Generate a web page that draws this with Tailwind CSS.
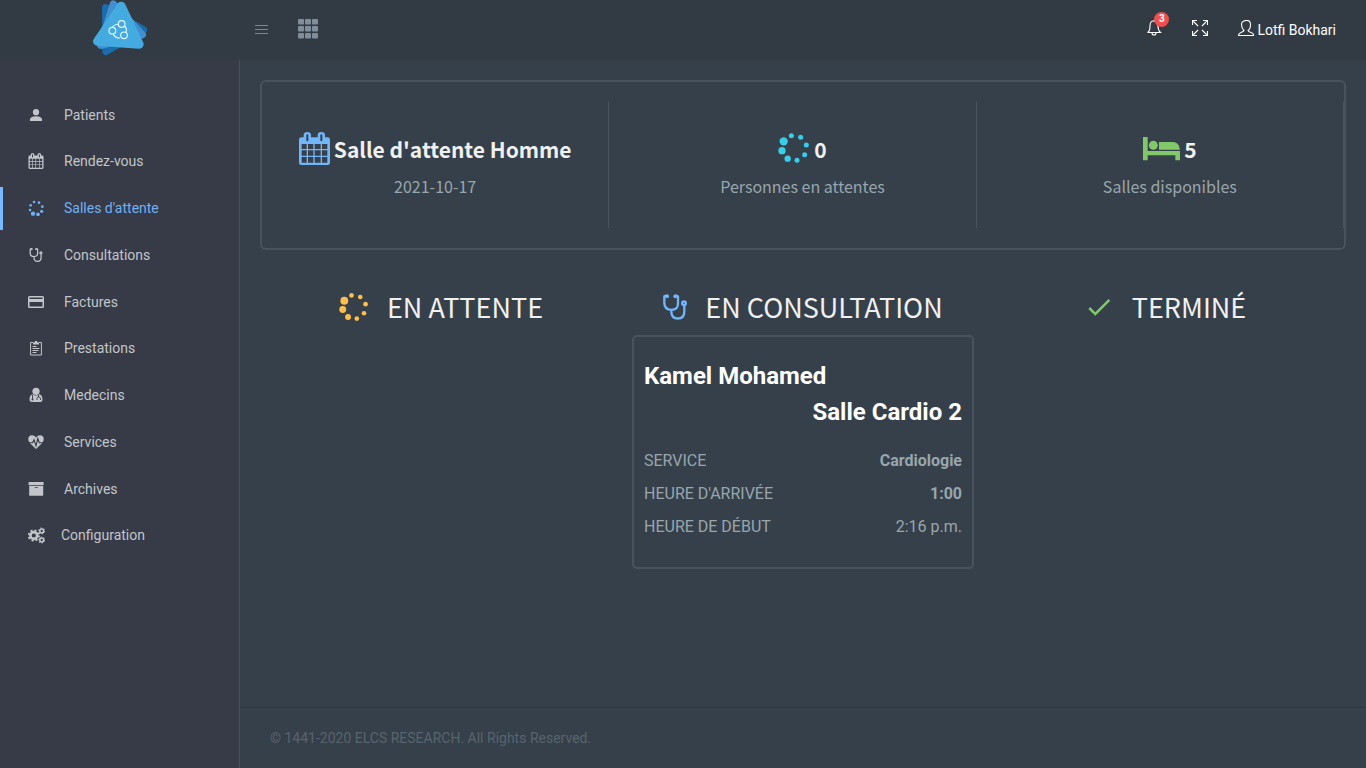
<!DOCTYPE html>
<html lang="fr">
<head>
<meta charset="utf-8">
<meta name="viewport" content="width=device-width, initial-scale=1">
<title>Salles d'attente</title>
<script src="https://cdn.jsdelivr.net/npm/@tailwindcss/browser@4"></script>
</head>
<body class="flex min-h-screen flex-col bg-[#36404a] font-[Roboto,sans-serif] text-sm text-[#98a6ad]">
<svg class="hidden" aria-hidden="true">
  <symbol id="calendar" viewBox="0 0 93 99">
    <path fill="currentColor" fill-rule="evenodd" d="M7 16H14V10Q14 0 25 0T36 10V16H56V10Q56 0 67 0T78 10V16H86Q93 16 93 23V92Q93 99 86 99H7Q0 99 0 92V23Q0 16 7 16ZM22 10V25Q22 28 25 28T28 25V10Q28 7 25 7T22 10ZM64 10V25Q64 28 67 28T70 25V10Q70 7 67 7T64 10ZM8 36V51H23V36ZM27 36V51H43V36ZM47 36V51H65V36ZM69 36V51H85V36ZM8 55V71H23V55ZM27 55V71H43V55ZM47 55V71H65V55ZM69 55V71H85V55ZM8 75V92H23V75ZM27 75V92H43V75ZM47 75V92H65V75ZM69 75V92H85V75Z"/>
  </symbol>
  <symbol id="spinner" viewBox="0 0 96 96">
    <g fill="currentColor"><circle cx="17" cy="28" r="12.5"/><circle cx="40" cy="11" r="7.5"/><circle cx="68" cy="16" r="7.5"/><circle cx="85" cy="39" r="7.5"/><circle cx="80" cy="68" r="7.5"/><circle cx="57" cy="85" r="7.5"/><circle cx="29" cy="80" r="9.5"/><circle cx="12" cy="56" r="11"/></g>
  </symbol>
  <symbol id="stethoscope" viewBox="0 0 72 77">
    <g fill="none" stroke="currentColor" stroke-width="7"><path d="M12 5H6Q4 5 4 8V26Q4 47 25 47T45 26V8Q45 5 42 5H38M25 48V52Q25 73 44.500 73T64 52V35"/><circle cx="63" cy="27" r="5.500"/></g>
    <circle cx="12" cy="6" r="6" fill="currentColor"/><circle cx="37" cy="6" r="6" fill="currentColor"/>
  </symbol>
</svg>

<header class="flex h-[60px] shrink-0 items-center bg-[#323a43] shadow-[0_0_3px_rgba(50,58,67,0.6)]">
  <a href="#" aria-label="Accueil" class="flex h-full w-60 justify-center">
    <svg class="h-14 w-14" viewBox="0 0 168 168" stroke-linejoin="round">
      <path d="M41 23L154 90L42 154Z" fill="#1b6cab" stroke="#1b6cab" stroke-width="22"/>
      <path d="M64 12L151 104L26 136Z" fill="#418fd0" stroke="#418fd0" stroke-width="22"/>
      <path d="M88 18L142 133L16 124Z" fill="#43abe0" stroke="#43abe0" stroke-width="26"/>
      <g fill="none" stroke="#e4f6ff" stroke-width="3.500"><circle cx="89" cy="72" r="10"/><circle cx="61" cy="92" r="10"/><circle cx="96" cy="106" r="10"/><path d="M61 81Q66 74 79 72M98 78Q106 86 102 97M64 103Q71 115 84 114"/></g>
    </svg>
  </a>
  <button type="button" aria-label="Menu" class="ml-3.5 text-[#7a8792]">
    <svg class="h-4 w-4" viewBox="0 0 16 16" fill="none" stroke="currentColor"><path d="M1 3.500h13M1 7.500h13M1 11.500h13" stroke-width="1.200"/></svg>
  </button>
  <button type="button" aria-label="Applications" class="mb-0.5 ml-7 text-[#7f8e9a]">
    <svg class="h-5 w-5" viewBox="0 0 20 20" fill="currentColor"><g id="row"><rect width="6" height="5.500" rx="1"/><rect x="7" width="6" height="5.500" rx="1"/><rect x="14" width="6" height="5.500" rx="1"/></g><use href="#row" y="7"/><use href="#row" y="14"/></svg>
  </button>
  <div class="ml-auto flex items-center pr-[30px] pb-1 text-white">
    <button type="button" aria-label="Notifications, 3" class="relative">
      <svg class="h-4 w-4" viewBox="0 0 16 16" fill="none" stroke="currentColor" stroke-width="1.100"><path d="M1.500 12.500Q4 11.500 4 6T8 1T12 6T14.500 12.500ZM6 13Q6 15 8 15T10 13M8 1V0"/></svg>
      <span class="absolute -top-2 left-2 flex h-[15px] w-[15px] items-center justify-center rounded-full bg-[#f04f4f] text-[10px] font-bold">3</span>
    </button>
    <button type="button" aria-label="Plein écran" class="ml-[30px]">
      <svg class="h-4 w-4" viewBox="0 0 16 16" fill="none" stroke="currentColor" stroke-width="1.100"><path d="M.5 5V.5H5M.5 .5L6 6M11 .5h4.500V5M15.500 .5L10 6M.5 11v4.500H5M.5 15.500L6 10M11 15.500h4.500V11M15.500 15.500L10 10"/></svg>
    </button>
    <button type="button" class="ml-[30px] flex items-start gap-[3px] pt-1">
      <svg class="h-4 w-4" viewBox="0 0 16 16" fill="none" stroke="currentColor" stroke-width="1.100"><path d="M6 10.500Q3.500 8 3.500 4.500T8 .5T12.500 4.500T10 10.500Q10 11.500 13 12.500T15.500 15.500H.5Q.5 13.500 3 12.500T6 10.500Z"/></svg>
      <span>Lotfi Bokhari</span>
    </button>
  </div>
</header>

<div class="flex grow">
  <aside class="w-60 shrink-0 border-r border-[#464f5b] bg-[#363b47] pt-[33px]">
    <nav>
      <ul class="flex h-[464px] flex-col justify-between text-[#c2c5c9]">
        <li><a href="#" class="flex h-[43px] items-center gap-5 pl-7"><svg class="h-4 w-4" viewBox="0 0 24 24" fill="currentColor"><path d="M12 3a4.700 4.700 0 1 1 0 9.400A4.700 4.700 0 0 1 12 3ZM12 14c6 0 9 2.500 9 4.700V21H3v-2.300C3 16.500 6 14 12 14Z"/></svg><span>Patients</span></a></li>
        <li><a href="#" class="flex h-[43px] items-center gap-5 pl-7"><svg class="h-4 w-4"><use href="#calendar"/></svg><span>Rendez-vous</span></a></li>
        <li><a href="#" aria-current="page" class="flex h-[43px] items-center gap-5 border-l-3 border-[#77b8ff] pl-[25px] text-[#71b0f6]"><svg class="h-4 w-4" viewBox="0 0 48 48" fill="currentColor"><circle cx="15" cy="41" r="6.500"/><circle cx="30" cy="43" r="5.500"/><circle cx="41" cy="34" r="4.700"/><circle cx="43" cy="20" r="4"/><circle cx="33" cy="8" r="4"/><circle cx="18" cy="6" r="4"/><circle cx="8" cy="16" r="4"/><circle cx="6" cy="30" r="4"/></svg><span>Salles d'attente</span></a></li>
        <li><a href="#" class="flex h-[43px] items-center gap-5 pl-7"><svg class="h-3.5 w-4"><use href="#stethoscope"/></svg><span>Consultations</span></a></li>
        <li><a href="#" class="flex h-[43px] items-center gap-5 pl-7"><svg class="h-4 w-4" viewBox="0 0 16 16"><path fill="currentColor" fill-rule="evenodd" d="M1.500 2h13A1.500 1.500 0 0 1 16 3.500v9a1.500 1.500 0 0 1-1.500 1.500h-13A1.500 1.500 0 0 1 0 12.500v-9A1.500 1.500 0 0 1 1.500 2ZM1.500 3.500V5h13V3.500ZM1.500 8v4.500h13V8Z"/></svg><span>Factures</span></a></li>
        <li><a href="#" class="flex h-[43px] items-center gap-5 pl-7"><svg class="h-4 w-4" viewBox="0 0 16 16" fill="none" stroke="currentColor"><path d="M5 2.500H2.600V15h10.800V2.500H11M4.500 6.500h4M4.500 8.500h7M4.500 10.500h6M4.500 12.500h4"/><path d="M5 4.500V2.500h1.500L7 1h2l.5 1.500H11v2Z" fill="currentColor" stroke="none"/></svg><span>Prestations</span></a></li>
        <li><a href="#" class="flex h-[43px] items-center gap-5 pl-7"><svg class="h-4 w-4" viewBox="0 0 16 16"><circle cx="8" cy="4.300" r="3.600" fill="currentColor"/><path d="M4.500 7.200Q8 10 11.500 7.200Q14.500 8 14.500 12.500Q14.500 15 12 15H4Q1.500 15 1.500 12.500Q1.500 8 4.500 7.200Z" fill="currentColor"/><path d="M4.500 8v4M10.500 8v2M9 13V11.500Q9 10 10.700 10T12.500 11.500V13" fill="none" stroke="#363b47" stroke-width=".9"/><circle cx="4.500" cy="12.500" r="1" fill="#363b47"/></svg><span>Medecins</span></a></li>
        <li><a href="#" class="flex h-[43px] items-center gap-5 pl-7"><svg class="h-4 w-4" viewBox="0 0 16 16"><path d="M8 15L1.500 8.700C-1 5 .5 1.200 4 1.200Q6.500 1.200 8 3.500Q9.500 1.200 12 1.200C15.500 1.200 17 5 14.500 8.700Z" fill="currentColor"/><path d="M0 8.700h4.600L6 5.800l2 6 1.800-7.300 1.500 4.200H16" fill="none" stroke="#363b47" stroke-width="1.100"/></svg><span>Services</span></a></li>
        <li><a href="#" class="flex h-[43px] items-center gap-5 pl-7"><svg class="h-4 w-4" viewBox="0 0 16 16" fill="currentColor"><rect x=".6" y="1" width="15" height="3.300" rx=".4"/><path fill-rule="evenodd" d="M1.200 5h14v9.200a.6 .6 0 0 1-.6.600H1.800a.6 .6 0 0 1-.6-.6ZM7 6.200a.4 .4 0 0 0 0 .9h2.600a.4 .4 0 0 0 0-.9Z"/></svg><span>Archives</span></a></li>
        <li><a href="#" class="flex h-[43px] items-center gap-4 pl-7"><svg class="h-[17px] w-[17px]" viewBox="0 0 17 17" fill="none" stroke="currentColor"><circle cx="5.800" cy="8.500" r="3.400" stroke-width="2.600"/><circle cx="5.800" cy="8.500" r="5.200" stroke-width="1.800" stroke-dasharray="2.100 1.984"/><circle cx="13.700" cy="4" r="1.900" stroke-width="1.500"/><circle cx="13.700" cy="4" r="2.900" stroke-width="1.100" stroke-dasharray="1.300 1.737"/><circle cx="13.700" cy="13" r="1.900" stroke-width="1.500"/><circle cx="13.700" cy="13" r="2.900" stroke-width="1.100" stroke-dasharray="1.300 1.737"/></svg><span>Configuration</span></a></li>
      </ul>
    </nav>
  </aside>

  <div class="flex min-w-0 grow flex-col">
    <main class="grow px-5 pt-5">
      <section class="rounded-md border-2 border-[#48535d] py-5 font-['Noto_Sans_CJK_JP',sans-serif]">
        <div class="-ml-5 grid grid-cols-3 text-center">
          <div class="h-[126px] border-r border-[#48535d] pt-[27px] pl-5">
            <h2 class="flex h-9 items-end justify-center gap-1 text-[21px] leading-8 font-bold text-[#f0f0f0]"><svg class="h-[33px] w-[31px] text-[#71b6f9]"><use href="#calendar"/></svg>Salle d'attente Homme</h2>
            <p class="mt-[7px] text-base leading-7">2021-10-17</p>
          </div>
          <div class="h-[126px] border-r border-[#48535d] pt-[27px] pl-5">
            <h2 class="flex h-9 items-end justify-center gap-1 text-[21px] leading-8 font-bold text-[#f0f0f0]"><svg class="mb-px h-8 w-8 text-[#35cfea]"><use href="#spinner"/></svg>0</h2>
            <p class="mt-[7px] text-base leading-7">Personnes en attentes</p>
          </div>
          <div class="h-[126px] border-r border-[#48535d] pt-[27px] pl-5">
            <h2 class="flex h-9 items-end justify-center gap-1 text-[21px] leading-8 font-bold text-[#f0f0f0]"><svg class="mb-1 h-6 w-[37px] text-[#81c868]" viewBox="0 0 111 72" fill="currentColor"><path d="M0 0H14V42H111V70H97V55H14V70H0ZM48 15H90Q108 15 111 38H48Z"/><circle cx="31" cy="25" r="13.500"/></svg>5</h2>
            <p class="mt-[7px] text-base leading-7">Salles disponibles</p>
          </div>
        </div>
      </section>

      <div class="grid grid-cols-3 pt-[37px]">
        <section class="px-2.5">
          <h2 class="flex h-10 items-center justify-center gap-[18px] font-['Noto_Sans_CJK_JP',sans-serif] text-[27px] leading-10 text-[#f0f0f0]"><svg class="h-[30px] w-[30px] text-[#ffbd4a]"><use href="#spinner"/></svg>EN ATTENTE</h2>
        </section>
        <section class="px-2.5">
          <h2 class="flex h-10 items-center justify-center gap-[18px] font-['Noto_Sans_CJK_JP',sans-serif] text-[27px] leading-10 text-[#f0f0f0]"><svg class="h-[26px] w-6 text-[#71b6f9]"><use href="#stethoscope"/></svg>EN CONSULTATION</h2>
          <article class="mt-2 rounded-[5px] border-2 border-[#48535d] px-2.5 pt-[21px] pb-6 text-base">
            <h3 class="text-2xl leading-9 font-bold text-white">Kamel Mohamed</h3>
            <p class="text-right text-2xl leading-9 font-bold text-white">Salle Cardio 2</p>
            <dl class="mt-3.5">
              <div class="flex h-[33px] items-center justify-between"><dt>SERVICE</dt><dd class="font-bold">Cardiologie</dd></div>
              <div class="flex h-[33px] items-center justify-between"><dt>HEURE D'ARRIVÉE</dt><dd class="font-bold">1:00</dd></div>
              <div class="flex h-[33px] items-center justify-between"><dt>HEURE DE DÉBUT</dt><dd>2:16 p.m.</dd></div>
            </dl>
          </article>
        </section>
        <section class="px-2.5">
          <h2 class="flex h-10 items-center justify-center gap-[18px] font-['Noto_Sans_CJK_JP',sans-serif] text-[27px] leading-10 text-[#f0f0f0]"><svg class="h-[30px] w-[30px] text-[#81c868]" viewBox="0 0 24 24" fill="currentColor"><path d="M21,7L9,19L3.500,13.500L4.910,12.090L9,16.170L19.590,5.590L21,7Z"/></svg>TERMINÉ</h2>
        </section>
      </div>
    </main>
    <footer class="border-t border-[#303841] px-[30px] py-5 text-[#56646e]">© 1441-2020 ELCS RESEARCH. All Rights Reserved.</footer>
  </div>
</div>
</body>
</html>
